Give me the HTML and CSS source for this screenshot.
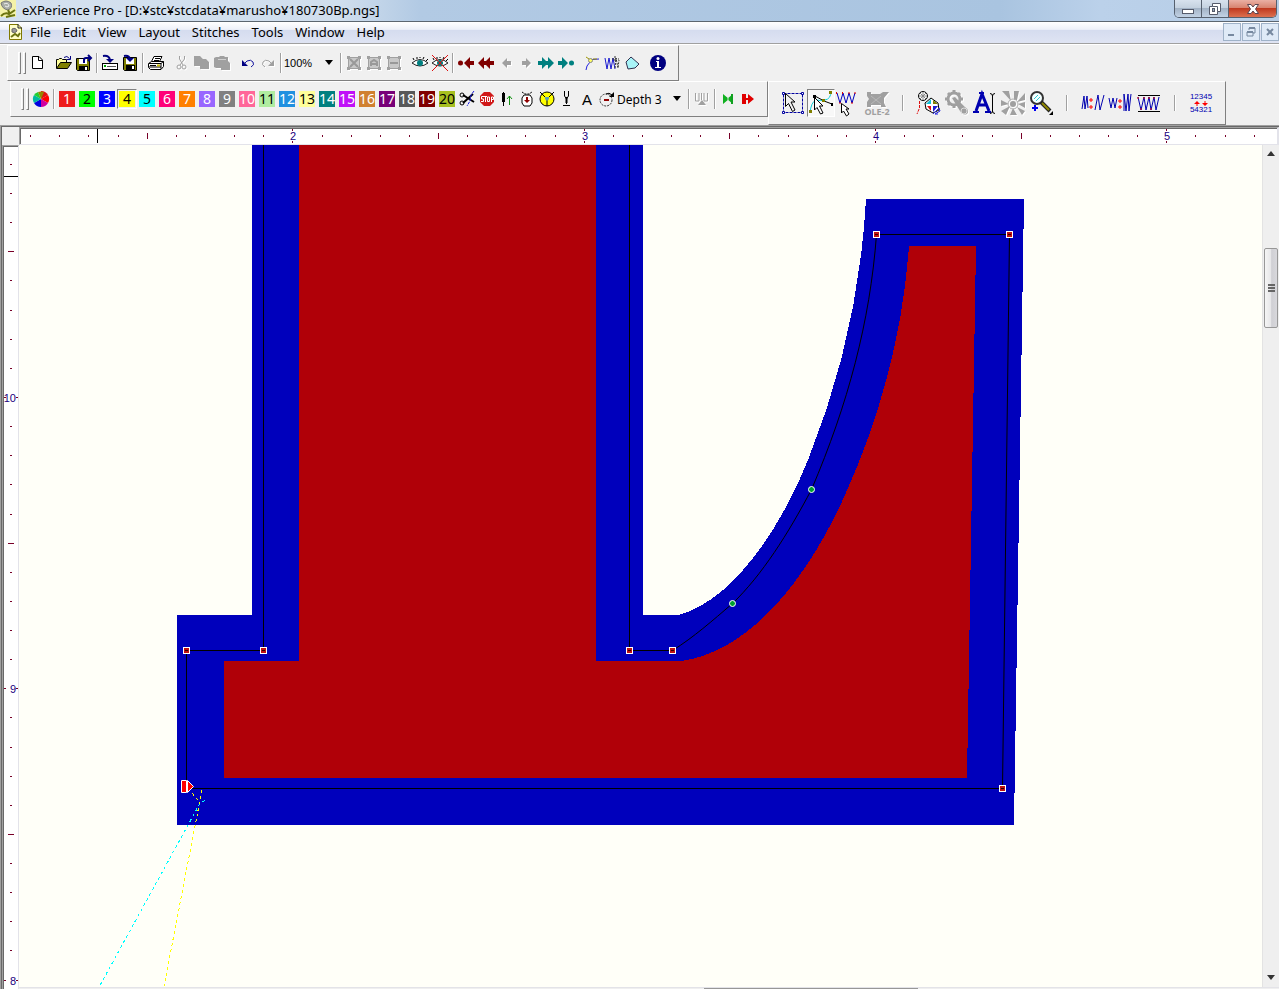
FILE: index.html
```html
<!DOCTYPE html>
<html lang="en">
<head>
    <meta charset="UTF-8">
    <meta name="viewport" content="width=device-width, initial-scale=1.0">
    <title>eXPerience Pro</title>
    <link rel="stylesheet" href="styles.css">
</head>
<body>
    <header class="titlebar">
        <svg class="app-icon" width="16" height="18" viewBox="0 0 16 18"><rect width="16" height="17" fill="#f4f2a8"/><path d="M1 3Q6-1 11 3Q13 8 8 10Q2 9 1 3Z" fill="#a9ada6" stroke="#777"/><path d="M4 4Q8 2 9 6Q7 8 5 6" fill="none" stroke="#eee"/><path d="M1 16Q5 12 9 14L15 10M6 17L15 15M8 10L10 14" fill="none" stroke="#6b7410" stroke-width="2"/></svg>
        <h1>eXPerience Pro - [D:¥stc¥stcdata¥marusho¥180730Bp.ngs]</h1>
        <div class="window-buttons">
            <button type="button" aria-label="Minimize"><svg width="14" height="14"><rect x="1.5" y="7.5" width="11" height="4" fill="#fff" stroke="#555b6b"/></svg></button>
            <button type="button" aria-label="Restore"><svg width="14" height="14"><path d="M4.500 1.500H12.500V9.500H9.500V12.500H1.500V4.500H4.500Z" fill="#fff" stroke="#555b6b"/><path d="M4.500 4.500H9.500V9.500" fill="none" stroke="#555b6b"/><rect x="4.500" y="6.500" width="2" height="3" fill="#9ab" stroke="#555b6b"/></svg></button>
            <button type="button" class="close" aria-label="Close"><svg width="14" height="14"><path d="M1.500 2.500H5L7 5L9 2.500H12.500L9.500 7L12.500 11.500H9L7 9L5 11.500H1.500L4.500 7Z" fill="#fff" stroke="#5a4450"/></svg></button>
        </div>
    </header>

    <nav class="menubar">
        <svg class="doc-icon" width="13" height="16"><path d="M.5.500H9L12.500 4V15.500H.5Z" fill="#ffffc8" stroke="#807800"/><path d="M9 0V4H13" fill="none" stroke="#222"/><path d="M3 5Q7 3 8 7Q6 10 3 8Z" fill="#999" stroke="#666"/><path d="M2 13L6 10L9 12L11 9" fill="none" stroke="#6b7410" stroke-width="2"/></svg>
        <a href="#">File</a>
        <a href="#">Edit</a>
        <a href="#">View</a>
        <a href="#">Layout</a>
        <a href="#">Stitches</a>
        <a href="#">Tools</a>
        <a href="#">Window</a>
        <a href="#">Help</a>
        <div class="mdi-buttons">
            <button type="button" aria-label="Minimize document"><svg width="12" height="12"><path d="M2 9H8" stroke="#7789a0" stroke-width="2"/></svg></button>
            <button type="button" aria-label="Restore document"><svg width="12" height="12"><path d="M4 4V2H10V7H8M2 6H8V10H2Z" fill="none" stroke="#7789a0"/><path d="M4 2H10M2 6H8" stroke="#7789a0" stroke-width="2"/></svg></button>
            <button type="button" aria-label="Close document"><svg width="12" height="12"><path d="M3 3L9 9M9 3L3 9" stroke="#7789a0" stroke-width="2"/></svg></button>
        </div>
    </nav>

    <div class="toolbars">
        <div class="toolbar standard">
            <span class="grip"></span>
            <button type="button" aria-label="New"><svg viewBox="0 0 20 20"><path d="M4.500 3.500H11L14.500 7V15.500H4.500Z" fill="#fff" stroke="#000"/><path d="M10.500 3.500V7.500H14.500" fill="none" stroke="#000"/></svg></button>
            <span class="space"></span>
            <button type="button" aria-label="Open"><svg viewBox="0 0 20 20"><path d="M2.500 15V6.500H4.500L5.500 5.500H7.500L8.500 6.500H12.500V9.500" fill="#ffff9c" stroke="#000"/><path d="M2.500 15.500L6.500 9.500H17.500L13.500 15.500Z" fill="#808000" stroke="#000"/><path d="M10 4.500Q13 2 15.500 5.500M16.500 3V6.500H13" fill="none" stroke="#000080"/></svg></button>
            <button type="button" aria-label="Export"><svg viewBox="0 0 20 20"><path d="M2.500 5.500H15.500V17.500H3.500L2.500 16.500Z" fill="#808000" stroke="#000"/><rect x="5" y="6" width="8" height="5" fill="#fff"/><rect x="5" y="13" width="9" height="4" fill="#000"/><rect x="11" y="14" width="2" height="3" fill="#fff"/><path d="M10 10V7Q10 5 12 5H17M14 2L17 5L14 8" fill="none" stroke="#000080" stroke-width="2"/></svg></button>
            <span class="sep"></span>
            <button type="button" aria-label="Read from disk"><svg viewBox="0 0 20 20"><rect x="2.500" y="10.500" width="15" height="6" fill="#fff" stroke="#000"/><path d="M7 13.500H16" stroke="#555"/><rect x="4" y="12" width="2" height="2" fill="#0a0"/><path d="M3 3Q9 2 10 7" fill="none" stroke="#000080" stroke-width="2"/><path d="M6 6H14L10 10Z" fill="#000080"/></svg></button>
            <button type="button" aria-label="Save"><svg viewBox="0 0 20 20"><path d="M3.500 4.500H16.500V17.500H4.500L3.500 16.500Z" fill="#808000" stroke="#000"/><rect x="6" y="5" width="8" height="6" fill="#fff"/><rect x="6" y="12" width="9" height="5" fill="#000"/><rect x="12" y="13" width="2" height="3" fill="#fff"/><path d="M4 3Q9 2 10 6" fill="none" stroke="#000080" stroke-width="2"/><path d="M6 5H14L10 9Z" fill="#000080"/></svg></button>
            <span class="sep"></span>
            <button type="button" aria-label="Print"><svg viewBox="0 0 20 20"><path d="M5.500 8.500L8 3.500H16L13.500 8.500" fill="#fff" stroke="#000"/><path d="M9 5.500H14M8 7.500H13" stroke="#000"/><path d="M2.500 10.500L5.500 8.500H17.500V13.500L15 16.500H4.500L2.500 14.500Z" fill="#fff" stroke="#000"/><path d="M3 10.500H15L17.500 8.500M15 10.500V16M3 14H15M4 12.500H10" fill="none" stroke="#000"/><path d="M11 12.500H14" stroke="#c9b800" stroke-width="2"/></svg></button>
            <span class="space"></span>
            <button type="button" class="off" aria-label="Cut"><svg viewBox="0 0 20 20"><path d="M7.500 3V6L11 12M12.500 3V6L8 12" fill="none" stroke="#a0a0a0"/><circle cx="7" cy="14" r="2" fill="none" stroke="#a0a0a0"/><circle cx="12" cy="14" r="2" fill="none" stroke="#a0a0a0"/></svg></button>
            <button type="button" class="off" aria-label="Copy"><svg viewBox="0 0 20 20"><path d="M2 3H8L11 6H14L17 9V16H8V13H2Z" fill="#a0a0a0"/></svg></button>
            <button type="button" class="off" aria-label="Paste"><svg viewBox="0 0 20 20"><path d="M2 5L4 4H7L8 3H12L13 4H16V8L18 10V17H9V15H4L2 14Z" fill="#a0a0a0"/><path d="M6 6.500H14" stroke="#d0d0d0"/></svg></button>
            <span class="space"></span>
            <button type="button" aria-label="Undo"><svg viewBox="0 0 20 20"><path d="M4 7V13H10Z" fill="#000080"/><path d="M6 11L9 8Q13 6 15 9Q17 12 13 14" fill="none" stroke="#1515a0"/></svg></button>
            <button type="button" class="off" aria-label="Redo"><svg viewBox="0 0 20 20"><path d="M16 7V13H10Z" fill="#a0a0a0"/><path d="M14 11L11 8Q7 6 5 9Q3 12 7 14" fill="none" stroke="#a0a0a0"/></svg></button>
            <span class="sep"></span>
            <div class="combo zoom">
                <select aria-label="Zoom"><option>100%</option><option>200%</option></select>
                <svg width="10" height="6"><path d="M1 0H9L5 5Z"/></svg>
            </div>
            <span class="sep"></span>
            <button type="button" class="off" aria-label="Delete block"><svg viewBox="0 0 20 20"><rect x="4.500" y="4.500" width="11" height="11" fill="#c8c8c8" stroke="#a0a0a0"/><path d="M3 3H6V6H3ZM14 3H17V6H14ZM3 14H6V17H3ZM14 14H17V17H14Z" fill="#a0a0a0"/><path d="M6 6L14 14M14 6L6 14" stroke="#999" stroke-width="2"/></svg></button>
            <button type="button" class="off" aria-label="Block up"><svg viewBox="0 0 20 20"><rect x="4.500" y="4.500" width="11" height="11" fill="#c8c8c8" stroke="#a0a0a0"/><path d="M3 3H6V6H3ZM14 3H17V6H14ZM3 14H6V17H3ZM14 14H17V17H14Z" fill="#a0a0a0"/><path d="M7 13V9L10 7L13 9V13M7 11H13" fill="none" stroke="#999" stroke-width="2"/></svg></button>
            <button type="button" class="off" aria-label="Block line"><svg viewBox="0 0 20 20"><rect x="4.500" y="4.500" width="11" height="11" fill="#c8c8c8" stroke="#a0a0a0"/><path d="M3 3H6V6H3ZM14 3H17V6H14ZM3 14H6V17H3ZM14 14H17V17H14Z" fill="#a0a0a0"/><path d="M6 10H14" stroke="#999" stroke-width="2"/></svg></button>
            <span class="space"></span>
            <button type="button" aria-label="Show"><svg viewBox="0 0 20 20"><path d="M2 10Q10 3 18 10Q10 16 2 10Z" fill="#fff" stroke="#222"/><circle cx="10" cy="10" r="3" fill="#008080"/><path d="M4 7L3 5M7 6V4M10 5V4M13 6L14 4M16 8L18 6" stroke="#000"/></svg></button>
            <button type="button" aria-label="Hide"><svg viewBox="0 0 20 20"><path d="M2 10Q10 3 18 10Q10 16 2 10Z" fill="#fff" stroke="#222"/><circle cx="10" cy="10" r="3" fill="#008080"/><path d="M4 7L3 5M7 6V4M10 5V4M13 6L14 4M16 8L18 6" stroke="#000"/><path d="M2 2L18 18M18 2L2 18" stroke="#e01010"/></svg></button>
            <span class="sep"></span>
            <button type="button" aria-label="First"><svg viewBox="0 0 20 20"><circle cx="4.500" cy="10" r="2.500" fill="#800000"/><path d="M8 10L14 4V8H18V12H14V16Z" fill="#800000"/></svg></button>
            <button type="button" aria-label="Previous block"><svg viewBox="0 0 20 20"><path d="M2 10L8 4V8H10L14 4V8H18V12H14V16L10 12H8V16Z" fill="#800000"/></svg></button>
            <button type="button" class="off" aria-label="Previous"><svg viewBox="0 0 20 20"><path d="M6 10L11 5V8H15V12H11V15Z" fill="#a0a0a0"/></svg></button>
            <button type="button" class="off" aria-label="Next"><svg viewBox="0 0 20 20"><path d="M15 10L10 5V8H6V12H10V15Z" fill="#a0a0a0"/></svg></button>
            <button type="button" aria-label="Next block"><svg viewBox="0 0 20 20"><path d="M18 10L12 4V8H10L6 4V8H2V12H6V16L10 12H12V16Z" fill="#008080"/></svg></button>
            <button type="button" aria-label="Last"><svg viewBox="0 0 20 20"><circle cx="15.500" cy="10" r="2.500" fill="#008080"/><path d="M12 10L6 4V8H2V12H6V16Z" fill="#008080"/></svg></button>
            <span class="space"></span>
            <button type="button" aria-label="Edit node"><svg viewBox="0 0 20 20"><path d="M4 17L5 13L8 9M10 6.500L17 6" fill="none" stroke="#2020e0"/><circle cx="8.500" cy="7.500" r="2" fill="#ffff60" stroke="#888"/><path d="M4 4L7 6M11 6H15" stroke="#a09800"/></svg></button>
            <button type="button" aria-label="Edit stitches"><svg viewBox="0 0 20 20"><path d="M3 5L5 16L7 5L9 16L11 5L13 16" fill="none" stroke="#1818d0"/><path d="M13 15L14 5L16 15L17 7M10 6H17M13 3V9" fill="none" stroke="#333" stroke-dasharray="2 1"/></svg></button>
            <button type="button" aria-label="Edit shape"><svg viewBox="0 0 20 20"><path d="M4 9L9 4L17 11L13 15L6 16Z" fill="#a8f4f8" stroke="#303050"/></svg></button>
            <span class="space"></span>
            <button type="button" aria-label="Information"><svg viewBox="0 0 20 20"><circle cx="10" cy="10" r="8" fill="#000080"/><circle cx="10" cy="5.500" r="1.500" fill="#fff"/><path d="M8 8H11V14H13V15H7V14H9V9H8Z" fill="#fff"/></svg></button>
        </div>

        <div class="toolbar-row">
            <div class="toolbar colors">
                <span class="grip"></span>
                <button type="button" aria-label="Palette"><svg viewBox="0 0 20 20"><path d="M10 10V2A8 8 0 0 1 17 6Z" fill="#e01010"/><path d="M10 10L17 6A8 8 0 0 1 17 14Z" fill="#ff0000"/><path d="M10 10L17 14A8 8 0 0 1 10 18Z" fill="#d000a0"/><path d="M10 10V18A8 8 0 0 1 3 14Z" fill="#0000e0"/><path d="M10 10L3 14A8 8 0 0 1 3 6Z" fill="#00b8a0"/><path d="M10 10L3 6A8 8 0 0 1 7 3Z" fill="#20d030"/><path d="M10 10L7 3A8 8 0 0 1 13 3Z" fill="#908800"/></svg></button>
                <span class="sep"></span>
                <div class="swatches" id="swatches"></div>
                <button type="button" aria-label="Trim"><svg viewBox="0 0 20 20"><path d="M6 6L17 13M6 14L16 5" stroke="#000" stroke-width="2"/><circle cx="5" cy="6" r="2" fill="none" stroke="#000"/><circle cx="5" cy="14" r="2" fill="none" stroke="#000"/><path d="M17 2L14 6L13 12L10 17" fill="none" stroke="#1818e0" stroke-dasharray="3 1"/></svg></button>
                <button type="button" aria-label="Stop"><svg viewBox="0 0 20 20"><path d="M7 3H13L17 7V13L13 17H7L3 13V7Z" fill="#d01818"/><path d="M7 7.500H4.500V10H6.500V12.500H4M7 7.500H10M8.500 7.500V13M10.500 8V12.500H12.500V8ZM14.500 13V8H16.500V10.500H15" fill="none" stroke="#fff"/></svg></button>
                <button type="button" aria-label="Needle up"><svg viewBox="0 0 20 20"><path d="M6.500 3V8M6.500 12V17" stroke="#000"/><rect x="5" y="4" width="3" height="9"/><path d="M12.500 16V7M10 10L12.500 7L15 10" fill="none" stroke="#109010"/></svg></button>
                <button type="button" aria-label="Lower"><svg viewBox="0 0 20 20"><path d="M5 3L8 5H12L15 3" fill="none" stroke="#000" stroke-dasharray="2 1"/><path d="M7 6H13L15 9V14L13 17H7L5 14V9Z" fill="#fff" stroke="#000"/><path d="M9 8H11V11H13L10 14L7 11H9Z" fill="#900000"/></svg></button>
                <button type="button" aria-label="Bobbin"><svg viewBox="0 0 20 20"><circle cx="10" cy="10" r="7" fill="#ff0" stroke="#000"/><path d="M3 3L10 10L17 3M10 10V17" fill="none" stroke="#000"/><path d="M8 8H12V10L10 12L8 10Z" fill="#60a0b0"/></svg></button>
                <button type="button" aria-label="Needle"><svg viewBox="0 0 20 20"><path d="M7.500 2V7L9.500 10V15M11.500 2V7L9.500 10M6 16.500H13" fill="none" stroke="#000"/><path d="M9.500 8V14" stroke="#000" stroke-width="2"/></svg></button>
                <button type="button" aria-label="Letter" class="letter">A</button>
                <button type="button" aria-label="Depth"><svg viewBox="0 0 20 20"><circle cx="9" cy="11" r="6" fill="none" stroke="#333" stroke-dasharray="2 1"/><path d="M9 5Q12 3 15 6" fill="none" stroke="#000"/><path d="M12 8H17V3Z" fill="#000"/><path d="M7 11H12" stroke="#900000" stroke-width="2"/></svg></button>
                <div class="combo depth">
                    <select aria-label="Depth level"><option>Depth 3</option><option>Depth 4</option></select>
                    <svg width="10" height="6"><path d="M1 0H9L5 5Z"/></svg>
                </div>
                <span class="sep"></span>
                <button type="button" class="off" aria-label="Underlay"><svg viewBox="0 0 20 20"><path d="M3.500 4V12H7V4M15.500 4V12H12V4M9.500 4V11" fill="none" stroke="#a0a0a0"/><path d="M10 11L14 16H6Z" fill="#a0a0a0"/></svg></button>
                <span class="sep"></span>
                <button type="button" aria-label="Start point"><svg viewBox="0 0 20 20"><path d="M5 5L11 10L5 15ZM15 5L9 10L15 15Z" fill="#10b020"/><path d="M14 5V15" stroke="#10a020" stroke-width="2"/></svg></button>
                <button type="button" aria-label="End point"><svg viewBox="0 0 20 20"><path d="M4 5H8V9H10V5L16 10L10 15V11H8V15H4Z" fill="#e00000"/></svg></button>
            </div>

            <div class="toolbar modes">
                <button type="button" aria-label="Select"><svg viewBox="0 0 28 28"><rect x="4.500" y="4.500" width="19" height="19" fill="none" stroke="#0000a0" stroke-dasharray="3 1"/><path d="M3.500 3.500H5.500V5.500H3.500ZM22.500 3.500H24.500V5.500H22.500ZM3.500 22.500H5.500V24.500H3.500ZM22.500 22.500H24.500V24.500H22.500Z" fill="#fff" stroke="#0000a0"/><path d="M6.500 4.500V17.500L9.500 14.500L13.500 22.500L16 21L12 13H16Z" fill="#f0f0f0" stroke="#000"/></svg></button>
                <button type="button" class="pressed" aria-label="Edit curve"><svg viewBox="0 0 28 28"><path d="M3 24Q4 13 9 11Q14 12 18 11Q24 10 24 2" fill="none" stroke="#10d0d8"/><path d="M8 7L17 12L25 15" fill="none" stroke="#000"/><path d="M2 21H5V24H2ZM15 10H18V13H15ZM22 2H25V5H22Z" fill="#808000"/><path d="M6 6H9V9H6ZM24 14H26V17H24Z" fill="#000"/><path d="M7.500 8.500V21L10 18.500L13.500 25L16 24L12.500 17H16Z" fill="#fff" stroke="#000"/></svg></button>
                <button type="button" aria-label="Edit stitch"><svg viewBox="0 0 28 28"><path d="M2 4L5 14L8 4L11 14L14 4L17 14L20 4" fill="none" stroke="#0000c0"/><path d="M1.500 3V5M7.500 3V5M14 3V5M20 3V5M5 13V15M17 13V15" stroke="#e00000"/><path d="M6.500 14.500V24L8.500 22L11.500 27L14 25L11 20H14Z" fill="#fff" stroke="#000"/></svg></button>
                <button type="button" class="off ole" aria-label="OLE-2"><svg viewBox="0 0 28 18"><path d="M4 2H8V4H17L20 2H26L21 8V13L23 17H18V15H8V17H4V12L6 9L4 6Z" fill="#a0a0a0"/><path d="M8 6L18 14M18 6L8 14" stroke="#b8b8b8"/></svg><span>OLE-2</span></button>
                <span class="sep"></span>
                <button type="button" aria-label="Digitize"><svg viewBox="0 0 28 28"><circle cx="8" cy="7" r="4.500" fill="#fff" stroke="#000"/><path d="M5 4L11 10M11 4L5 10M8 3V11M4 7H12" stroke="#888"/><path d="M10 14L16 9L23 14L24 21L18 24L11 20Z" fill="#fff" stroke="#000"/><path d="M11 15L16 10V15Z" fill="#10c0d8"/><path d="M18 11L23 15H18Z" fill="#808000"/><path d="M12 17H16V22Z" fill="#e01010"/><path d="M18 17H23L18 23Z" fill="#2020d0"/><path d="M4.500 12V19L2 25" fill="none" stroke="#e01010" stroke-dasharray="3 1"/><path d="M18 25L24 19L25 22L20 25L23 25" fill="none" stroke="#2020e0"/></svg></button>
                <button type="button" class="off" aria-label="Settings"><svg viewBox="0 0 28 28"><circle cx="11" cy="10" r="6" fill="none" stroke="#a0a0a0" stroke-width="3"/><path d="M11 1V4M11 16V19M2 10H5M17 10H20M5 4L7 6M15 14L17 16M17 4L15 6M5 16L7 14" stroke="#a0a0a0" stroke-width="3"/><path d="M9 9L12 8L22 18Q27 21 24 25Q20 27 17 22Z" fill="#a0a0a0"/><circle cx="21" cy="22" r="3" fill="#a0a0a0" stroke="#ddd"/></svg></button>
                <button type="button" aria-label="Text"><svg viewBox="0 0 28 28"><path d="M5 22L11 5L18 22M8 16H16" fill="none" stroke="#0000b0" stroke-width="3"/><path d="M2 23H8M14 23H20M8 4H13" stroke="#0000b0" stroke-width="2"/><path d="M19 4.500Q21.500 4.500 21.500 7V22Q21.500 24.500 19 24.500M24 4.500Q21.500 4.500 21.500 7M24 24.500Q21.500 24.500 21.500 22" fill="none" stroke="#000"/></svg></button>
                <button type="button" class="off" aria-label="Effects"><svg viewBox="0 0 28 28"><path d="M12 12L3 2H10ZM15 11L15 2H20L18 11ZM18 13L26 4V11ZM19 15L26 13V19ZM18 18L26 22L23 26ZM14 19L18 26H11ZM11 17L7 26L2 22ZM10 15L2 17V11Z" fill="#a0a0a0"/><circle cx="14" cy="15" r="5" fill="none" stroke="#b0b0b0"/><circle cx="14" cy="15" r="3" fill="#a0a0a0"/></svg></button>
                <button type="button" aria-label="Magnify"><svg viewBox="0 0 28 28"><circle cx="10" cy="9" r="6" fill="#f4ffff" stroke="#333" stroke-width="2"/><path d="M7 10L11 6M9 12L13 8" stroke="#30c8d0"/><path d="M14 13L23 22" stroke="#222" stroke-width="4"/><path d="M15 14L22 21" stroke="#908800" stroke-width="2"/><path d="M8 16V22M5 19H11" stroke="#0000f0" stroke-width="2"/><path d="M26 22V26H22Z"/></svg></button>
                <span class="sep"></span>
                <button type="button" aria-label="Join stitches"><svg viewBox="0 0 28 28"><path d="M3 20L5 7L6 20L8 7L9 19M16 21L19 6L21 21L25 6" fill="none" stroke="#0000b0"/><path d="M10 11H14M12 9V13M10 18H14M12 16V20" stroke="#f00"/></svg></button>
                <button type="button" aria-label="Match stitches"><svg viewBox="0 0 28 28"><path d="M2 9L4 19L6 9L8 19L10 9M17 22V5L19 22L21 5L22 22L24 5" fill="none" stroke="#0000b0"/><path d="M11 12H15M13 10V14M11 18H15M13 16V20" stroke="#f00"/></svg></button>
                <button type="button" aria-label="Fill stitches"><svg viewBox="0 0 28 28"><path d="M3 6.500H25M3 22.500H25" stroke="#000"/><path d="M3 8L6 21L9 8L11 21L14 8L16 21L19 8L21 21L24 8" fill="none" stroke="#0000b0"/><path d="M3 8V10M9 8V10M14 8V10M19 8V10M6 19V21M16 19V21" stroke="#e00000"/></svg></button>
                <span class="sep"></span>
                <button type="button" class="renumber" aria-label="Renumber"><span>12345</span><svg viewBox="0 0 22 5"><path d="M7 0L10 3H4ZM12 2H18L15 5Z" fill="#f00"/><path d="M7 2V5M15 0V3" stroke="#f00"/></svg><span>54321</span></button>
            </div>
        </div>
    </div>

    <main class="workspace">
        <div class="corner"></div>
        <div class="ruler horizontal"><svg id="ruler-x"></svg></div>
        <div class="ruler vertical"><svg id="ruler-y"></svg></div>
        <div class="canvas">
            <svg>
                <g transform="translate(-19 -145)">
                    <path class="blue" d="M252 145V615H177V825H1014L1024 199H866C861 290 842 375 808 460C780 530 731 602 678 615H643V145Z"/>
                    <path class="red" d="M299 145V661H224V778H967L976 246H909C903 330 882 413 845 495C810 573 754 650 682 661H596V145Z"/>
                    <path class="outline" d="M263.500 145V650.500H186.500V788.500H1002.500L1009.500 234.500H876.500C870 322 848 404 811.500 489.500C788 534 762 575 732.500 603.500C712 621 694 637 672.500 650.500H629.500V145"/>
                    <path class="jump yellow" d="M192 793L200 803M202 790L164 986"/>
                    <path class="jump cyan" d="M205 800L199 805L98 989"/>
                </g>
                <g transform="translate(-19 -145)" id="nodes"></g>
            </svg>
        </div>
        <div class="scrollbar vertical-scroll">
            <svg width="10" height="6"><path d="M5 0L9 5H1Z" fill="#333"/></svg>
            <div class="thumb"><i></i><i></i><i></i></div>
            <svg class="down" width="10" height="6"><path d="M1 0H9L5 5Z" fill="#333"/></svg>
        </div>
        <div class="scrollbar horizontal-scroll"><div class="thumb"></div></div>
    </main>

    <script>
        // Thread palette: background, text colour
        const threads = [
            ['#ee1c1c', '#fff'], ['#00ff00', '#000'], ['#0000ff', '#fff'], ['#ffff00', '#000'],
            ['#00ffff', '#000'], ['#ff0078', '#fff'], ['#ff8000', '#fff'], ['#9966ff', '#fff'],
            ['#808080', '#fff'], ['#ff6699', '#fff'], ['#b0eca0', '#000'], ['#2090e0', '#fff'],
            ['#ffff99', '#000'], ['#008080', '#fff'], ['#c010f8', '#fff'], ['#d08030', '#fff'],
            ['#780078', '#fff'], ['#585858', '#fff'], ['#800000', '#fff'], ['#a8c020', '#000']
        ];
        const swatches = document.getElementById('swatches');
        threads.forEach(([back, text], i) => {
            const b = document.createElement('button');
            b.type = 'button';
            b.className = i === 3 ? 'swatch selected' : 'swatch';
            b.innerHTML = `<span style="background:${back};color:${text}">${i + 1}</span>`;
            swatches.appendChild(b);
        });

        // Rulers, ten ticks to the inch
        const inch = 291.3;

        function drawRulerX() {
            const svg = document.getElementById('ruler-x');
            const zero = 271.4 - 2 * inch;
            let out = '';
            for (let k = 11; ; k++) {
                const x = Math.round(zero + k * inch / 10);
                if (x > svg.clientWidth - 12) break;
                if (k % 10 === 0) {
                    out += `<path d="M${x} 0h1v2h-1zM${x} 12h1v2h-1z"/><text x="${x + 1}" y="11" text-anchor="middle">${k / 10}</text>`;
                } else if (k % 5 === 0) {
                    out += `<path d="M${x} 4h1v6h-1z"/>`;
                } else {
                    out += `<path d="M${x} 6h1v2h-1z"/>`;
                }
            }
            svg.innerHTML = out + '<path class="cursor" d="M76 0h1v14h-1z"/>';
        }

        function drawRulerY() {
            const svg = document.getElementById('ruler-y');
            const ten = 250;
            let out = '';
            for (let k = 108; k > 0; k--) {
                const y = Math.round(ten + (100 - k) * inch / 10);
                if (y > svg.clientHeight) break;
                if (k % 10 === 0) {
                    out += `<path d="M0 ${y}h2v1h-2zM12 ${y}h2v1h-2z"/><text x="12" y="${y + 5}" text-anchor="end">${k / 10}</text>`;
                } else if (k % 5 === 0) {
                    out += `<path d="M4 ${y}h6v1h-6z"/>`;
                } else {
                    out += `<path d="M6 ${y}h2v1h-2z"/>`;
                }
            }
            svg.innerHTML = out + '<path class="cursor" d="M0 29h14v1h-14z"/>';
        }

        // Outline nodes
        const corners = [[186, 650], [263, 650], [629, 650], [672, 650], [876, 234], [1009, 234], [1002, 788]];
        const curves = [[811, 489], [732, 603]];
        let nodes = '';
        corners.forEach(([x, y]) => {
            nodes += `<rect class="node" x="${x - 2.5}" y="${y - 2.5}" width="6" height="6"/><path class="dot" d="M${x - 1} ${y}h3v1h-3z"/>`;
        });
        curves.forEach(([x, y]) => {
            nodes += `<circle class="node curve" cx="${x + 0.5}" cy="${y + 0.5}" r="3"/>`;
        });
        nodes += '<path class="node start" d="M181.500 780.500H186.500V792.500H181.500ZM187.500 780.500L193.500 786.500L187.500 792.500Z"/>';
        document.getElementById('nodes').innerHTML = nodes;

        drawRulerX();
        drawRulerY();
        window.addEventListener('resize', () => { drawRulerX(); drawRulerY(); });
    </script>
</body>
</html>
```
FILE: styles.css
```css
* { box-sizing: border-box; }
html { height: 100%; }
body { margin: 0; height: 100%; display: flex; flex-direction: column; overflow: hidden; background: #f0f0f0; color: #000; font-family: "Noto Sans", sans-serif; font-size: 13px; }
button { margin: 0; padding: 0; border: none; background: none; color: inherit; font-family: inherit; }
svg { display: block; flex: none; }

.titlebar { display: flex; align-items: flex-start; height: 22px; flex: none; background: linear-gradient(to right, #d4e1ef 0, #d0deed 340px, #b2cae4 420px, #a9c4e0 1000px, #bbd1ea 1100px, #b6cde6 100%); border-bottom: 1px solid #5c6670; }
.titlebar h1 { margin: 0; padding-left: 6px; flex: 1; font-size: 13px; font-weight: normal; line-height: 20px; white-space: nowrap; }
.window-buttons { display: flex; height: 18px; margin-right: 2px; border: 1px solid #56606e; border-top: none; border-radius: 0 0 5px 5px; overflow: hidden; }
.window-buttons button { width: 27px; display: flex; justify-content: center; align-items: center; background: linear-gradient(#d8e2ee 0, #c5d2e0 45%, #a3b3c6 50%, #c2d2e4 100%); border-right: 1px solid #56606e; }
.window-buttons .close { width: 47px; border-right: none; background: linear-gradient(#eab0a4 0, #d88470 45%, #c03a20 50%, #dc7050 100%); }

.menubar { display: flex; align-items: center; height: 22px; flex: none; padding: 0 0 2px 9px; background: linear-gradient(#fff 0, #eef1f9 35%, #d5dcef 40%, #dfe4f3 100%); border-bottom: 1px solid #a0a0a0; }
.menubar a { margin-left: 12px; color: #000; text-decoration: none; line-height: 18px; }
.menubar .doc-icon + a { margin-left: 8px; }
.mdi-buttons { display: flex; gap: 1px; margin-left: auto; }
.mdi-buttons button { width: 18px; height: 18px; display: flex; align-items: center; justify-content: center; background: #dfeaf7; border: 1px solid #9fb2c8; }

.toolbars { flex: none; border-top: 1px solid #fff; }
.toolbar { display: flex; align-items: center; height: 36px; border: 1px solid; border-color: #fff #808080 #808080 #fff; }
.toolbar button { width: 20px; height: 20px; flex: none; display: flex; align-items: center; justify-content: center; }
.toolbar button svg { width: 20px; height: 20px; }
.toolbar .off svg { filter: drop-shadow(1px 1px 0 #fff); }
.standard { width: 672px; margin-left: 7px; padding-left: 10px; }
.toolbar-row { display: flex; align-items: flex-start; height: 44px; }
.colors { width: 758px; margin-left: 10px; padding-left: 10px; }
.grip { display: flex; gap: 2px; width: 8px; height: 22px; margin-right: 2px; }
.grip::before, .grip::after { content: ""; width: 3px; border: 1px solid; border-color: #fff #808080 #808080 #fff; }
.space { width: 6px; flex: none; }
.sep { width: 2px; height: 20px; margin: 0 2px; flex: none; border-left: 1px solid #a0a0a0; border-right: 1px solid #fff; }
.combo { display: flex; align-items: center; }
.combo select { flex: 1; min-width: 0; border: none; background: none; padding: 0; appearance: none; color: #000; font-family: inherit; font-size: 12px; outline: none; }
.zoom { width: 54px; padding-right: 4px; }
.zoom select { font-family: "Liberation Sans", sans-serif; font-size: 11px; }
.depth { width: 69px; padding-right: 4px; }
.letter { font-family: "Liberation Sans", sans-serif; font-size: 15px; }

.swatches { display: flex; }
.swatch span { width: 16px; height: 16px; font-size: 14px; line-height: 16px; text-align: center; }
.swatch.selected { border: 1px solid; border-color: #808080 #fff #fff #808080; }

.modes { height: 44px; width: 458px; padding-left: 10px; }
.toolbar.modes button { width: 28px; height: 28px; }
.toolbar.modes button svg { width: 28px; height: 28px; }
.modes .sep { margin: 0 11px; height: 16px; }
.modes .pressed { border: 1px solid; border-color: #808080 #fff #fff #808080; background: #f8f8f8; }
.toolbar.modes .ole { flex-direction: column; color: #a0a0a0; font-size: 9px; font-weight: bold; line-height: 8px; }
.toolbar.modes .ole svg { height: 18px; }
.toolbar.modes .renumber { flex-direction: column; color: #0000b0; font-family: "Liberation Sans", sans-serif; font-size: 8px; line-height: 8px; }
.toolbar.modes .renumber svg { width: 22px; height: 5px; }

.workspace { flex: 1; min-height: 0; display: grid; grid-template-columns: 17px 1fr 17px; grid-template-rows: 18px 1fr 2px; padding: 1px 0 0 1px; border-top: 1px solid #a0a0a0; border-left: 1px solid #a0a0a0; background: #696969; }
.corner { background: #f0f0f0; }
.ruler { padding: 1px 0 0 1px; border: 1px solid; border-color: #a0a0a0 #e3e3ea #e3e3ea #a0a0a0; background: #fff; box-shadow: inset 1px 1px 0 #696969; overflow: hidden; }
.ruler svg { width: 100%; height: 100%; fill: #780028; shape-rendering: crispEdges; }
.ruler text { fill: #200080; font-family: "Liberation Sans", sans-serif; font-size: 11px; }
.ruler .cursor { fill: #000; }
.horizontal { grid-column: 2 / 4; border-right-width: 2px; }
.vertical { grid-row: 2 / 4; border-bottom: none; }
.canvas { background: #fffff8; overflow: hidden; }
.canvas svg { width: 100%; height: 100%; }
.blue { fill: #0000bc; shape-rendering: crispEdges; }
.red { fill: #b00008; shape-rendering: crispEdges; }
.outline { fill: none; stroke: #000; }
.jump { fill: none; stroke-dasharray: 3 3; shape-rendering: crispEdges; }
.yellow { stroke: #ffff00; }
.cyan { stroke: #00ffff; }
.node { fill: #c01010; stroke: #fff; }
.node.curve { fill: #00a030; }
.node.start { fill: #f00; }
.dot { fill: #300; }

.scrollbar { background: #efefef; }
.vertical-scroll { display: flex; flex-direction: column; align-items: center; padding: 6px 1px; border-left: 1px solid #e3e3e3; }
.vertical-scroll .thumb { width: 100%; height: 80px; margin-top: 91px; display: flex; flex-direction: column; align-items: center; justify-content: center; gap: 1px; border: 1px solid #979797; border-radius: 2px; background: linear-gradient(to right, #f5f5f5 0, #e6e6e8 50%, #cfcfd4 55%, #d8d8dc 100%); }
.thumb i { width: 7px; height: 2px; background: #666; }
.vertical-scroll .down { margin-top: auto; }
.horizontal-scroll { grid-column: 2 / 4; border-top: 1px solid #e3e3e8; }
.horizontal-scroll .thumb { width: 17%; height: 1px; margin-left: 685px; background: #979797; }
```
